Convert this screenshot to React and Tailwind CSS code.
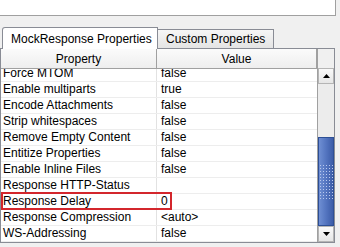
import React from 'react';

const rows = [
    ['Force MTOM', 'false'],
    ['Enable multiparts', 'true'],
    ['Encode Attachments', 'false'],
    ['Strip whitespaces', 'false'],
    ['Remove Empty Content', 'false'],
    ['Entitize Properties', 'false'],
    ['Enable Inline Files', 'false'],
    ['Response HTTP-Status', ''],
    ['Response Delay', '0'],
    ['Response Compression', '<auto>'],
    ['WS-Addressing', 'false'],
];

const App = () => {
    return (
        <div
            className="relative h-[247px] w-[340px] overflow-hidden bg-[#f0f0f0] text-[12px] text-black"
            style={{ fontFamily: '"Liberation Sans", Arial, sans-serif' }}
        >
            {/* top field */}
            <div className="h-[16px] w-[336px] border-b border-r border-[#a0a0a0] bg-white" />

            {/* Tabs */}
            <div className="mt-[10px] flex h-[22px] items-end pl-[2px]">
                <div className="relative z-10 -mb-px flex h-[22px] w-[156px] items-center rounded-tl-[3px] border border-b-0 border-[#898c95] bg-white pl-[8px]">
                    MockResponse Properties
                </div>
                <div className="flex h-[19px] w-[116px] items-center border border-b-0 border-l-0 border-[#898c95] bg-gradient-to-b from-[#f6f6f6] to-[#e4e4e4] pl-[8px]">
                    Custom Properties
                </div>
            </div>

            {/* Table panel */}
            <div className="flex h-[195px] w-[335px] border border-[#898c95] bg-white">
                <div className="flex w-[316px] flex-col">
                    {/* header */}
                    <div className="flex h-[20px] shrink-0 border-b border-[#a0a0a0] bg-gradient-to-b from-[#fbfbfb] to-[#eeeeee]">
                        <div className="flex w-[156px] items-center justify-center border-r border-[#a0a0a0]">Property</div>
                        <div className="flex flex-1 items-center justify-center border-r border-[#a0a0a0]">Value</div>
                    </div>
                    {/* body, scrolled */}
                    <div className="flex-1 overflow-hidden">
                        <div className="mt-[-3px]">
                            {rows.map(([name, value]) => (
                                <div key={name} className="flex h-[16px] border-b border-[#ededed] leading-[15px]">
                                    <div className="w-[156px] border-r border-[#e2e2e2] pl-[2px] whitespace-nowrap">{name}</div>
                                    <div className="flex-1 pl-[4px]">{value}</div>
                                </div>
                            ))}
                        </div>
                    </div>
                </div>

                {/* scrollbar column */}
                <div className="flex w-[17px] flex-col border-l border-[#a0a0a0]">
                    <div className="h-[19px] shrink-0 bg-[#f0f0f0]" />
                    <div className="flex flex-1 flex-col bg-[#ececec]">
                        <div className="flex h-[16px] shrink-0 items-center justify-center border border-[#b5b5b5] bg-gradient-to-b from-[#fafafa] to-[#e6e6e6]">
                            <svg width="7" height="4" viewBox="0 0 7 4"><path d="M0 4 L3.5 0 L7 4 Z" fill="#000" /></svg>
                        </div>
                        <div className="h-[53px] shrink-0" />
                        <div className="flex flex-1 items-center justify-center border border-[#2d4f95] bg-gradient-to-r from-[#6f8fd3] via-[#5475c0] to-[#3c5ca8]">
                            <svg width="13" height="34" viewBox="0 0 13 34">
                                <defs>
                                    <pattern id="grip" width="3" height="3" patternUnits="userSpaceOnUse">
                                        <rect x="0" y="0" width="1" height="1" fill="#b9c9ee" />
                                    </pattern>
                                </defs>
                                <rect x="0" y="0" width="13" height="34" fill="url(#grip)" />
                            </svg>
                        </div>
                        <div className="flex h-[16px] shrink-0 items-center justify-center border border-[#b5b5b5] bg-gradient-to-b from-[#fafafa] to-[#e6e6e6]">
                            <svg width="7" height="4" viewBox="0 0 7 4"><path d="M0 0 L7 0 L3.5 4 Z" fill="#000" /></svg>
                        </div>
                    </div>
                </div>
            </div>

            {/* annotation box */}
            <div className="absolute left-[1px] top-[192px] h-[18px] w-[171px] border-2 border-[#d3262c]" />
        </div>
    );
};

export default App;
